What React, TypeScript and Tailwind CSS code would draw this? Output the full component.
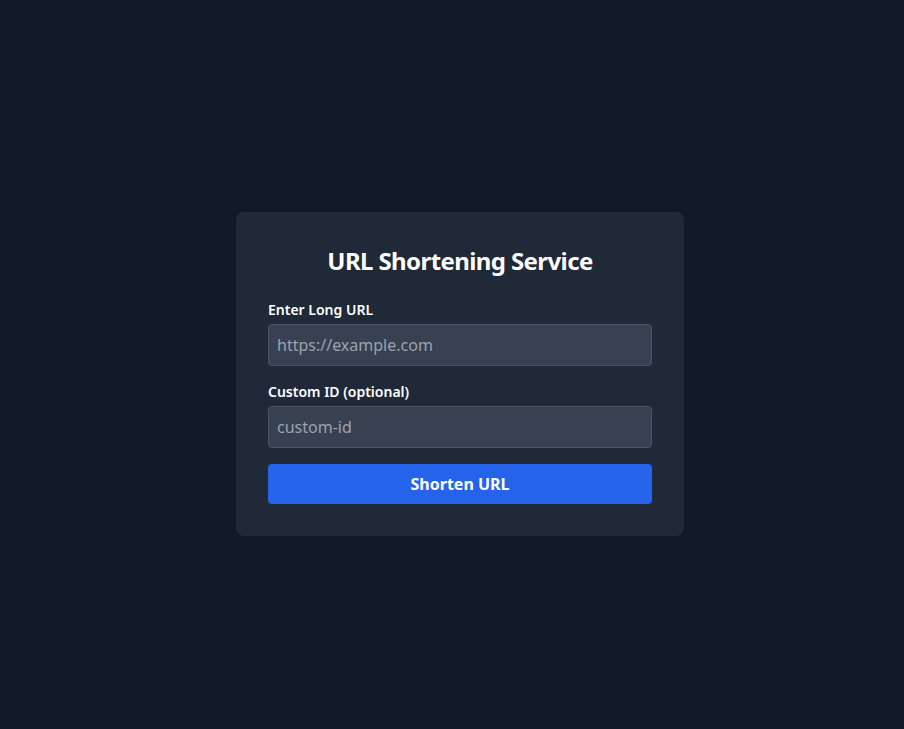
import { useState } from 'react';

export default function App() {
  const [url, setUrl] = useState('');
  const [customId, setCustomId] = useState('');

  return (
    <div
      className="min-h-screen bg-[#111827] flex items-center justify-center pt-[19px] pl-4 text-white"
      style={{ fontFamily: '"Noto Sans", "Open Sans", sans-serif' }}
    >
      <div className="w-full max-w-md bg-[#1f2937] rounded-lg p-8">
        <h1 className="text-2xl font-bold text-center mb-6 pt-[2px] leading-[30px] tracking-[-0.025em]">URL Shortening Service</h1>
        <form onSubmit={(e) => e.preventDefault()} className="flex flex-col gap-4">
          <div>
            <label className="block text-sm font-semibold mb-1">Enter Long URL</label>
            <input
              type="text"
              value={url}
              onChange={(e) => setUrl(e.target.value)}
              placeholder="https://example.com"
              className="w-full px-2 py-2 bg-[#374151] border border-[#4b5563] rounded text-white placeholder-[#9ca3af] outline-none"
            />
          </div>
          <div>
            <label className="block text-sm font-semibold mb-1">Custom ID (optional)</label>
            <input
              type="text"
              value={customId}
              onChange={(e) => setCustomId(e.target.value)}
              placeholder="custom-id"
              className="w-full px-2 py-2 bg-[#374151] border border-[#4b5563] rounded text-white placeholder-[#9ca3af] outline-none"
            />
          </div>
          <button
            type="submit"
            className="w-full py-2 bg-[#2563eb] hover:bg-[#1d4ed8] rounded font-bold text-white"
          >
            Shorten URL
          </button>
        </form>
      </div>
    </div>
  );
}
